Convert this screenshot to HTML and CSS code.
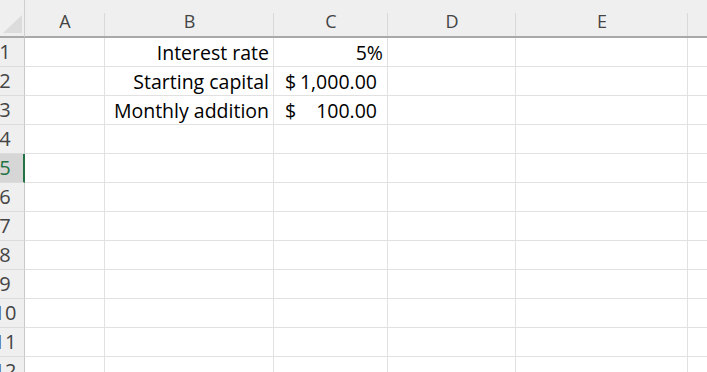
FILE: index.html
```html
<!DOCTYPE html>
<html lang="en">
<head>
  <meta charset="UTF-8" />
  <meta name="viewport" content="width=device-width, initial-scale=1.0"/>
  <title>Compound interest</title>
  <link rel="stylesheet" href="styles.css">
</head>
<body>

<div class="sheet">
  <!-- column headers -->
  <div class="row col-head">
    <div class="corner"><span class="tri"></span></div>
    <div class="hcell">A</div>
    <div class="hcell">B</div>
    <div class="hcell">C</div>
    <div class="hcell">D</div>
    <div class="hcell">E</div>
    <div class="hcell"></div>
  </div>

  <div class="row">
    <div class="rnum"><span>1</span></div>
    <div class="cell"></div>
    <div class="cell right">Interest rate</div>
    <div class="cell right">5%</div>
    <div class="cell"></div><div class="cell"></div><div class="cell"></div>
  </div>
  <div class="row">
    <div class="rnum"><span>2</span></div>
    <div class="cell"></div>
    <div class="cell right">Starting capital</div>
    <div class="cell money"><span>$</span><span>1,000.00</span></div>
    <div class="cell"></div><div class="cell"></div><div class="cell"></div>
  </div>
  <div class="row">
    <div class="rnum"><span>3</span></div>
    <div class="cell"></div>
    <div class="cell right">Monthly addition</div>
    <div class="cell money"><span>$</span><span>100.00</span></div>
    <div class="cell"></div><div class="cell"></div><div class="cell"></div>
  </div>
  <div class="row">
    <div class="rnum"><span>4</span></div>
    <div class="cell"></div><div class="cell"></div><div class="cell"></div>
    <div class="cell"></div><div class="cell"></div><div class="cell"></div>
  </div>
  <div class="row">
    <div class="rnum active"><span>5</span></div>
    <div class="cell"></div><div class="cell"></div><div class="cell"></div>
    <div class="cell"></div><div class="cell"></div><div class="cell"></div>
  </div>
  <div class="row">
    <div class="rnum"><span>6</span></div>
    <div class="cell"></div><div class="cell"></div><div class="cell"></div>
    <div class="cell"></div><div class="cell"></div><div class="cell"></div>
  </div>
  <div class="row">
    <div class="rnum"><span>7</span></div>
    <div class="cell"></div><div class="cell"></div><div class="cell"></div>
    <div class="cell"></div><div class="cell"></div><div class="cell"></div>
  </div>
  <div class="row">
    <div class="rnum"><span>8</span></div>
    <div class="cell"></div><div class="cell"></div><div class="cell"></div>
    <div class="cell"></div><div class="cell"></div><div class="cell"></div>
  </div>
  <div class="row">
    <div class="rnum"><span>9</span></div>
    <div class="cell"></div><div class="cell"></div><div class="cell"></div>
    <div class="cell"></div><div class="cell"></div><div class="cell"></div>
  </div>
  <div class="row">
    <div class="rnum"><span>10</span></div>
    <div class="cell"></div><div class="cell"></div><div class="cell"></div>
    <div class="cell"></div><div class="cell"></div><div class="cell"></div>
  </div>
  <div class="row">
    <div class="rnum"><span>11</span></div>
    <div class="cell"></div><div class="cell"></div><div class="cell"></div>
    <div class="cell"></div><div class="cell"></div><div class="cell"></div>
  </div>
  <div class="row">
    <div class="rnum"><span>12</span></div>
    <div class="cell"></div><div class="cell"></div><div class="cell"></div>
    <div class="cell"></div><div class="cell"></div><div class="cell"></div>
  </div>
</div>

</body>
</html>
```

FILE: styles.css
```css
html, body {
  margin: 0;
  padding: 0;
  background: #fff;
  overflow: hidden;
}
.sheet {
  font-family: "Open Sans", Arial, sans-serif;
  width: 707px;
  height: 372px;
  overflow: hidden;
}
.row {
  display: grid;
  grid-template-columns: 25px 80px 169px 114px 128px 172px 40px;
  height: 29px;
}
.row > div {
  box-sizing: border-box;
  border-right: 1px solid #e1e1e1;
  border-bottom: 1px solid #e1e1e1;
}

/* column header strip */
.col-head {
  height: 38px;
  background: #efefef;
}
.col-head > div {
  border-right: none;
  border-bottom: 2px solid #a9a9a9;
}
.hcell {
  display: flex;
  align-items: flex-end;
  justify-content: center;
  padding-bottom: 3px;
  font-size: 18px;
  color: #444;
  background: linear-gradient(#d9d9d9, #d9d9d9) no-repeat right 13px / 1px 100%;
}
.corner {
  position: relative;
  border-right: 1px solid #cfcfcf !important;
}
.tri {
  position: absolute;
  right: 2px;
  bottom: 3px;
  width: 0;
  height: 0;
  border-left: 19px solid transparent;
  border-bottom: 18px solid #dcdcdc;
}

/* row numbers */
.rnum {
  background: #efefef;
  border-right: 1px solid #c9c9c9 !important;
  border-bottom: 1px solid #dcdcdc !important;
  font-size: 20px;
  color: #444;
  display: flex;
  align-items: center;
}
.rnum span {
  width: 10px;
  display: flex;
  justify-content: center;
  white-space: nowrap;
  line-height: 1;
}
.rnum.active {
  background: #d6d6d6;
  color: #217346;
  border-right: 2px solid #217346 !important;
}

/* cells */
.cell {
  font-size: 19.5px;
  color: #000;
  display: flex;
  align-items: center;
  padding: 0 4px;
  white-space: nowrap;
}
.right {
  justify-content: flex-end;
}
.money {
  justify-content: space-between;
  padding: 0 10px 0 11px;
}
```
